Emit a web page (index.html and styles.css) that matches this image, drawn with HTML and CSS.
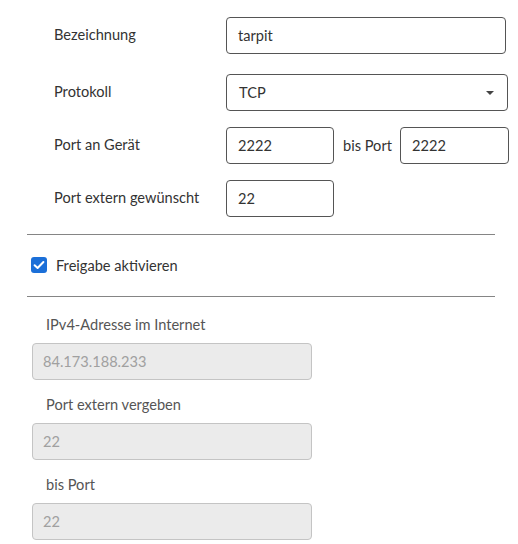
FILE: index.html
```html
<!DOCTYPE html>
<html lang="de">
<head>
<meta charset="utf-8">
<link rel="stylesheet" href="styles.css">
</head>
<body>
<div class="page">
  <div class="rows">
    <div class="row r1">
      <label class="lbl">Bezeichnung</label>
      <div class="field w280">tarpit</div>
    </div>
    <div class="row r2">
      <label class="lbl">Protokoll</label>
      <div class="field select w282"><span>TCP</span><span class="arrow"></span></div>
    </div>
    <div class="row r3">
      <label class="lbl">Port an Gerät</label>
      <div class="field w108">2222</div>
      <span class="bis">bis Port</span>
      <div class="field w109">2222</div>
    </div>
    <div class="row r4">
      <label class="lbl">Port extern gewünscht</label>
      <div class="field w108">22</div>
    </div>
  </div>
  <hr class="divider d1">
  <div class="check-row">
    <span class="checkbox"><svg width="16" height="16" viewBox="0 0 16 16"><path d="M3.6 8.2 L6.6 11 L12.4 5" fill="none" stroke="#fff" stroke-width="2" stroke-linecap="round" stroke-linejoin="round"/></svg></span>
    <span class="check-label">Freigabe aktivieren</span>
  </div>
  <hr class="divider d2">
  <div class="readonly">
    <div class="ro-block">
      <div class="ro-label">IPv4-Adresse im Internet</div>
      <div class="ro-field">84.173.188.233</div>
    </div>
    <div class="ro-block">
      <div class="ro-label">Port extern vergeben</div>
      <div class="ro-field">22</div>
    </div>
    <div class="ro-block">
      <div class="ro-label">bis Port</div>
      <div class="ro-field">22</div>
    </div>
  </div>
</div>
</body>
</html>
```
FILE: styles.css
```css
html, body {
  margin: 0;
  padding: 0;
  background: #fff;
}
body {
  font-family: "Lato", "Open Sans", sans-serif;
  font-size: 14.6px;
  color: #333;
}
.page {
  padding: 17px 0 0 27px;
}
.rows {
  padding-left: 27px;
}
.row {
  display: flex;
  align-items: center;
  height: 37px;
  white-space: nowrap;
}
.r2 { margin-top: 20px; }
.r3 { margin-top: 16px; }
.r4 { margin-top: 16px; }
.lbl {
  width: 172px;
  flex: none;
  position: relative;
  top: -1px;
}
.field {
  box-sizing: border-box;
  height: 37px;
  border: 1px solid #555;
  border-radius: 4px;
  padding: 0 11px;
  display: flex;
  align-items: center;
  flex: none;
  color: #333;
}
.w280 { width: 280px; }
.w282 { width: 282px; }
.w108 { width: 108px; }
.w109 { width: 109px; }
.select {
  justify-content: space-between;
  padding-left: 12px;
  padding-right: 13px;
}
.arrow {
  width: 0;
  height: 0;
  border-left: 4px solid transparent;
  border-right: 4px solid transparent;
  border-top: 4px solid #444;
}
.bis {
  flex: none;
  width: 66px;
  padding-left: 9px;
  box-sizing: border-box;
}
.divider {
  border: 0;
  border-top: 1px solid #858585;
  margin: 0;
  width: 468px;
}
.d1 { margin-top: 17px; }
.check-row {
  display: flex;
  align-items: center;
  height: 20px;
  margin-top: 20px;
  padding-left: 4px;
}
.checkbox {
  width: 16px;
  height: 16px;
  border-radius: 3px;
  background: #1b6fd8;
  display: block;
  flex: none;
}
.checkbox svg { display: block; }
.check-label {
  margin-left: 9px;
}
.d2 { margin-top: 21px; }
.readonly {
  padding: 18px 0 0 5px;
}
.ro-block + .ro-block {
  margin-top: 15px;
}
.ro-label {
  height: 20px;
  line-height: 20px;
  padding-left: 14px;
  color: #555;
  margin-bottom: 8px;
}
.ro-field {
  box-sizing: border-box;
  width: 280px;
  height: 37px;
  border: 1px solid #c4c4c4;
  border-radius: 4px;
  background: #ebebeb;
  color: #a0a0a0;
  padding: 0 10px;
  display: flex;
  align-items: center;
}
```
